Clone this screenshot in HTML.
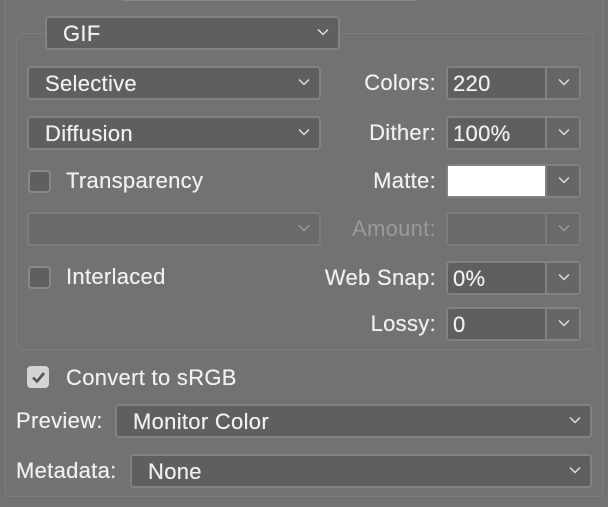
<!DOCTYPE html>
<html><head><style>
*{box-sizing:border-box;margin:0;padding:0}
body{width:608px;height:507px;background:#727272;position:relative;overflow:hidden;font-family:"Liberation Sans",sans-serif;font-size:22px;letter-spacing:0.3px;color:#f0f0f0;text-shadow:0 0 0.5px #f0f0f0}
.a{position:absolute}
.dd{position:absolute;background:#5f5f5f;border:2px solid #828282;border-radius:4px;height:34px}
.dd span{position:absolute;left:16px;top:3px}
.chev{position:absolute;right:9px;top:10px;width:12px;height:8px}
.fld{position:absolute;left:446px;width:135px;height:34px;background:#5f5f5f;border:2px solid #828282;border-radius:4px}
.fld .v{position:absolute;left:5px;top:3px}
.fld .sep{position:absolute;left:97px;top:0;bottom:0;width:2px;background:#828282}
.fld .btn{position:absolute;left:99px;right:0;top:0;bottom:0;background:#666}
.lbl{position:absolute;right:172px;text-align:right}
.cb{position:absolute;width:23px;height:23px;border:2px solid #888;border-radius:4px;background:#5f5f5f}
.dis{color:#9a9a9a;text-shadow:none}
</style></head><body>
<div class="a" style="left:122px;top:-3px;width:294px;height:4px;border:1px solid #888;border-top:none"></div>
<div class="a" style="left:5px;top:-10px;width:598px;height:507px;border:1px solid #7e7e7e;border-radius:6px"></div>
<div class="a" style="left:16px;top:33px;width:578px;height:317px;border:1px solid #7c7c7c;border-radius:6px"></div>

<div class="dd" style="left:45px;top:16px;width:295px"><span>GIF</span><svg class="chev" viewBox="0 0 12 8"><path d="M1 1.5L6 6.5L11 1.5" fill="none" stroke="#ddd" stroke-width="1.5"/></svg></div>
<div class="dd" style="left:27px;top:66px;width:294px"><span>Selective</span><svg class="chev" viewBox="0 0 12 8"><path d="M1 1.5L6 6.5L11 1.5" fill="none" stroke="#ddd" stroke-width="1.5"/></svg></div>
<div class="dd" style="left:27px;top:116px;width:294px"><span>Diffusion</span><svg class="chev" viewBox="0 0 12 8"><path d="M1 1.5L6 6.5L11 1.5" fill="none" stroke="#ddd" stroke-width="1.5"/></svg></div>
<div class="cb" style="left:28px;top:170px"></div><div class="a" style="left:66px;top:168px">Transparency</div>
<div class="dd" style="left:27px;top:212px;width:294px;background:#6a6a6a;border-color:#7c7c7c"><svg class="chev" viewBox="0 0 12 8"><path d="M1 1.5L6 6.5L11 1.5" fill="none" stroke="#999" stroke-width="1.5"/></svg></div>
<div class="cb" style="left:28px;top:266px"></div><div class="a" style="left:66px;top:264px">Interlaced</div>

<div class="lbl" style="top:70px">Colors:</div>
<div class="fld" style="top:66px"><span class="v">220</span><div class="sep"></div><div class="btn"><svg class="chev" viewBox="0 0 12 8"><path d="M1 1.5L6 6.5L11 1.5" fill="none" stroke="#ddd" stroke-width="1.5"/></svg></div></div>
<div class="lbl" style="top:120px">Dither:</div>
<div class="fld" style="top:116px"><span class="v">100%</span><div class="sep"></div><div class="btn"><svg class="chev" viewBox="0 0 12 8"><path d="M1 1.5L6 6.5L11 1.5" fill="none" stroke="#ddd" stroke-width="1.5"/></svg></div></div>
<div class="lbl" style="top:168px">Matte:</div>
<div class="fld" style="top:164px"><div class="a" style="left:0;top:0;width:97px;height:30px;background:#fff"></div><div class="sep"></div><div class="btn"><svg class="chev" viewBox="0 0 12 8"><path d="M1 1.5L6 6.5L11 1.5" fill="none" stroke="#ddd" stroke-width="1.5"/></svg></div></div>
<div class="lbl dis" style="top:216px">Amount:</div>
<div class="fld" style="top:212px;background:#6a6a6a;border-color:#7c7c7c"><div class="sep" style="background:#7c7c7c"></div><div class="btn" style="background:#6a6a6a"><svg class="chev" viewBox="0 0 12 8"><path d="M1 1.5L6 6.5L11 1.5" fill="none" stroke="#999" stroke-width="1.5"/></svg></div></div>
<div class="lbl" style="top:265px">Web Snap:</div>
<div class="fld" style="top:261px"><span class="v">0%</span><div class="sep"></div><div class="btn"><svg class="chev" viewBox="0 0 12 8"><path d="M1 1.5L6 6.5L11 1.5" fill="none" stroke="#ddd" stroke-width="1.5"/></svg></div></div>
<div class="lbl" style="top:311px">Lossy:</div>
<div class="fld" style="top:307px"><span class="v">0</span><div class="sep"></div><div class="btn"><svg class="chev" viewBox="0 0 12 8"><path d="M1 1.5L6 6.5L11 1.5" fill="none" stroke="#ddd" stroke-width="1.5"/></svg></div></div>

<div class="cb" style="left:27px;top:366px;background:#d4d4d4;border-color:#d4d4d4;width:22px;height:22px"><svg style="position:absolute;left:2px;top:2px" width="15" height="15" viewBox="0 0 15 15"><path d="M2 7.5L6 11.5L13 3" fill="none" stroke="#555" stroke-width="2.6"/></svg></div>
<div class="a" style="left:66px;top:365px">Convert to sRGB</div>
<div class="a" style="left:16px;top:408px">Preview:</div>
<div class="dd" style="left:115px;top:404px;width:477px"><span>Monitor Color</span><svg class="chev" viewBox="0 0 12 8"><path d="M1 1.5L6 6.5L11 1.5" fill="none" stroke="#ddd" stroke-width="1.5"/></svg></div>
<div class="a" style="left:16px;top:458px">Metadata:</div>
<div class="dd" style="left:130px;top:454px;width:462px"><span>None</span><svg class="chev" viewBox="0 0 12 8"><path d="M1 1.5L6 6.5L11 1.5" fill="none" stroke="#ddd" stroke-width="1.5"/></svg></div>
</body></html>
